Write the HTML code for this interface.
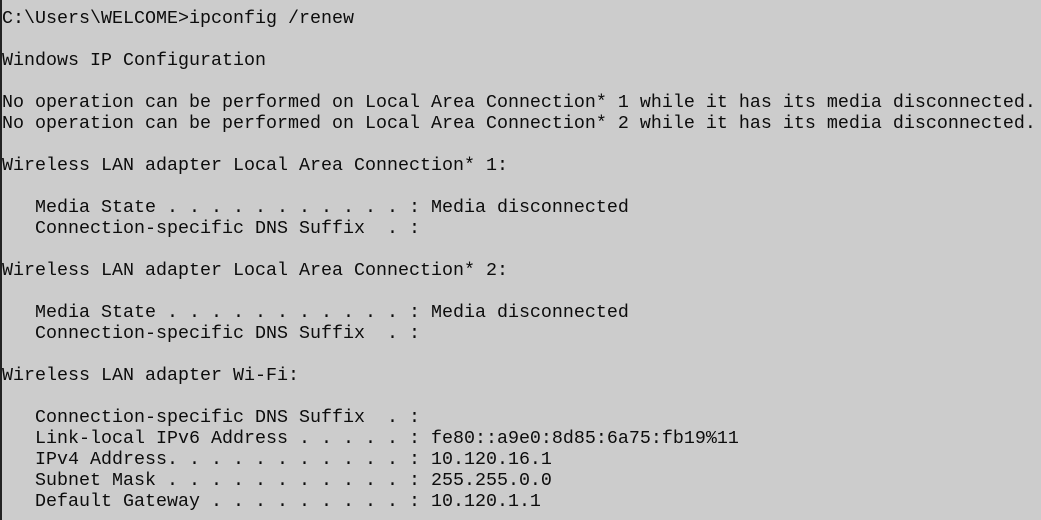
<!DOCTYPE html>
<html><head><meta charset="utf-8"><style>
html,body{margin:0;padding:0;}
body{width:1041px;height:520px;background:#cccccc;overflow:hidden;position:relative;border-left:2px solid #222;box-sizing:border-box;}
pre{margin:0;position:absolute;left:0;top:8px;font-family:"Liberation Mono",monospace;font-size:18.33px;line-height:21px;color:#0c0c0c;white-space:pre;}
</style></head><body><pre>C:\Users\WELCOME>ipconfig /renew

Windows IP Configuration

No operation can be performed on Local Area Connection* 1 while it has its media disconnected.
No operation can be performed on Local Area Connection* 2 while it has its media disconnected.

Wireless LAN adapter Local Area Connection* 1:

   Media State . . . . . . . . . . . : Media disconnected
   Connection-specific DNS Suffix  . :

Wireless LAN adapter Local Area Connection* 2:

   Media State . . . . . . . . . . . : Media disconnected
   Connection-specific DNS Suffix  . :

Wireless LAN adapter Wi-Fi:

   Connection-specific DNS Suffix  . :
   Link-local IPv6 Address . . . . . : fe80::a9e0:8d85:6a75:fb19%11
   IPv4 Address. . . . . . . . . . . : 10.120.16.1
   Subnet Mask . . . . . . . . . . . : 255.255.0.0
   Default Gateway . . . . . . . . . : 10.120.1.1</pre></body></html>
